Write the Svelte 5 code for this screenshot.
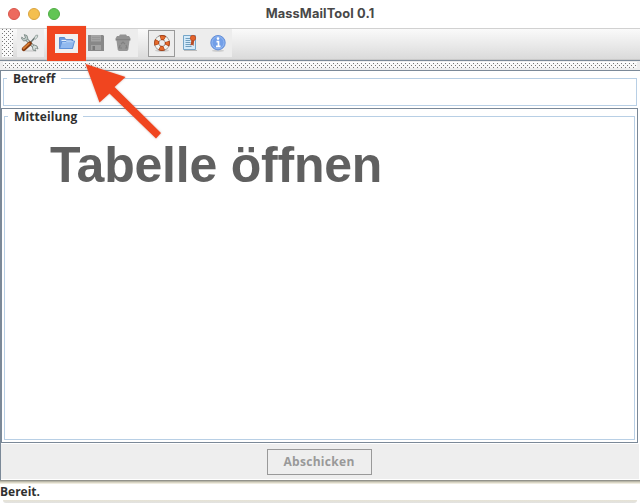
<script>
  const title = 'MassMailTool 0.1';
</script>

<div class="window">
  <header>
    <div class="lights"><i class="red"></i><i class="yellow"></i><i class="green"></i></div>
    <h1>{title}</h1>
  </header>

  <div class="toolbar">
    <div class="grip"></div>
    <div class="group first">
      <svg class="icon" width="20" height="20" viewBox="0 0 20 20">
        <ellipse cx="10" cy="17.8" rx="7" ry="1" fill="#d2d2d2" />
        <path d="M5 5l9 9" stroke="#687572" stroke-width="3" />
        <path d="M5 5l9 9" stroke="#cbd6d2" stroke-width="1.6" />
        <path d="M4.2 1.6l2.8 1 .8 2.8-1.6 2.2-2.5.3-2-1.8v-2l2.2 1.6 1.6-1z" fill="#becbc7" stroke="#75827e" stroke-width=".8" />
        <path d="M12.4 13.6l1.8-1.6 2.8 1 1 3-1.8-.8-1.2 1 .6 1.8-2.6-1z" fill="#d5deda" stroke="#75827e" stroke-width=".8" />
        <path d="M9.8 10.2l5.2-5.6" stroke="#687572" stroke-width="1.5" />
        <path d="M14 5.3l1.8-3 1.9-.2-.2 2.2-2.2 2z" fill="#d5dedb" stroke="#84918d" stroke-width=".7" />
        <path d="M3.8 16l6-5.5" stroke="#843b11" stroke-width="4.2" stroke-linecap="round" />
        <path d="M3.5 15.5l5.5-5" stroke="#d77b32" stroke-width="1.7" stroke-linecap="round" />
      </svg>
    </div>
    <div class="group files">
      <div class="cell highlight">
        <svg class="icon" width="20" height="20" viewBox="0 0 20 20">
          <path d="M2.5 15.5v-11h5l1 2h7v9z" fill="#6b9ade" stroke="#5d8acb" />
          <path d="M4.5 7.5h10" stroke="#e5f0fd" stroke-width="1.2" />
          <path d="M2.7 15.5l2-6.5h3.5l1-1h8.3l-2 7.5z" fill="#91b9ef" stroke="#5f91d9" />
          <path d="M5.2 9.7h3.3l1-1h7" stroke="#bdd7f8" fill="none" />
        </svg>
      </div>
      <div class="cell">
        <svg class="icon" width="20" height="20" viewBox="0 0 20 20">
          <path d="M2 2h15l1 1v15H2z" fill="#888" />
          <path d="M5 2h10v6.5H5z" fill="#a3a3a3" />
          <path d="M6 4.5h8M6 6.5h8" stroke="#979797" />
          <path d="M5 12h10v5H5z" fill="#a2a2a2" /><path d="M6.5 13H9v4H6.5z" fill="#787878" />
        </svg>
      </div>
      <div class="cell">
        <svg class="icon" width="20" height="20" viewBox="0 0 20 20">
          <path d="M6 3l1-1.5h6L14 3h2l1.5 2.5v2h-15v-2L4 3z" fill="#929292" />
          <path d="M3.4 7h13.2l-1.3 9.5-1 1.5H5.7l-1-1.5z" fill="#969696" />
          <path d="M3 6.7h14" stroke="#818181" />
          <path d="M8 11l2-2 2 2M13 12l1 3h-2M9 15H6l1.2-3" fill="none" stroke="#818181" stroke-width="1.2" />
        </svg>
      </div>
    </div>
    <div class="group help">
      <div class="cell selected">
        <svg class="icon" width="20" height="20" viewBox="0 0 20 20">
          <ellipse cx="10" cy="17.5" rx="7" ry="1.4" fill="#ccc" />
          <circle cx="10" cy="10" r="5.4" fill="none" stroke="#777" stroke-width="5" />
          <circle cx="10" cy="10" r="5.4" fill="none" stroke="#f2f2ee" stroke-width="3.8" />
          <circle cx="10" cy="10" r="5.4" fill="none" stroke="#a94014" stroke-width="5" stroke-dasharray="4.8 3.68" stroke-dashoffset="2.4" />
          <circle cx="10" cy="10" r="5.4" fill="none" stroke="#e46a2c" stroke-width="3.2" stroke-dasharray="3.8 4.68" stroke-dashoffset="1.9" />
        </svg>
      </div>
      <div class="cell">
        <svg class="icon" width="20" height="20" viewBox="0 0 20 20">
          <path d="M4 17.5h13" stroke="#bbb" />
          <path d="M3.5 2.5h12v14h-12z" fill="#d4eafa" stroke="#75a6c8" />
          <path d="M5.5 5.5h5M5.5 7.5h5M5.5 9.5h5M5.5 11.5h7M5.5 13.5h6" stroke="#709fbe" />
          <path d="M11.5 6.5l-1 6 1.8-.8 1.2 1.3.8-6.5z" fill="#b84c25" />
          <circle cx="13" cy="5" r="2.7" fill="#e4632b" stroke="#b64620" stroke-width=".7" />
        </svg>
      </div>
      <div class="cell">
        <svg class="icon" width="20" height="20" viewBox="0 0 20 20">
          <ellipse cx="10" cy="17.7" rx="6" ry="1" fill="#ccc" />
          <circle cx="10" cy="9.7" r="7.2" fill="#729fe8" stroke="#6790d7" />
          <circle cx="10" cy="9.7" r="6" fill="none" stroke="#92b8f3" />
          <path d="M8.5 8.7h2v4.7m-2.5 0h4.5" fill="none" stroke="#fff" stroke-width="1.7" />
          <circle cx="10" cy="5.6" r="1.3" fill="#fff" />
        </svg>
      </div>
    </div>
  </div>

  <div class="dragbar">
    <div class="dots"></div>
  </div>

  <main>
    <section class="subject">
      <div class="frame"><h2>Betreff</h2></div>
    </section>
    <section class="message">
      <div class="frame">
        <h2>Mitteilung</h2>
        <p>Tabelle öffnen</p>
      </div>
    </section>
    <div class="actions"><button disabled>Abschicken</button></div>
  </main>

  <footer>
    <div class="groove"></div>
    <span>Bereit.</span>
    <div class="bottom"></div>
  </footer>

  <svg class="pointer" width="640" height="150" viewBox="0 0 640 150">
    <path d="M85.500 64l40 13-11 10 46.500 46-5 5.500-46.500-45-10 9z" fill="#f0451f" />
  </svg>
</div>

<style>
  :global(body) { margin: 0; background: #fff; }
  * { box-sizing: border-box; }
  .window { position: relative; display: flex; flex-direction: column; width: 640px; height: 503px; overflow: hidden; background: #fff; color: #303030; font: bold 12px/16px "Open Sans", "Noto Sans", sans-serif; }
  header { display: grid; grid-template-columns: 60px 520px 60px; height: 28px; flex: none; }
  .lights { display: flex; gap: 8px; padding: 8px 0 0 8px; }
  .lights i { width: 12px; height: 12px; flex: none; border-radius: 50%; }
  .red { background: #ed6a5e; border: 1px solid #d9564b; }
  .yellow { background: #f4bf4f; border: 1px solid #dba540; }
  .green { background: #61c554; border: 1px solid #50ae45; }
  h1 { margin: 0; text-align: center; font: 700 12.8px/27px Inter, sans-serif; letter-spacing: .13px; color: #484848; }
  .toolbar { height: 32px; flex: none; display: flex; border-top: 1px solid #d1d1d1; background: linear-gradient(#fafafa, #e9e9e9 55%, #dadada); border-bottom: 1px solid #c9c9c9; }
  .grip, .dots { background-image: radial-gradient(circle at .5px .5px, #777 .6px, transparent .7px), radial-gradient(circle at 2.5px 2.5px, #777 .6px, transparent .7px); background-size: 4px 4px; }
  .grip { width: 11px; height: 28px; margin: 0 4px 0 2px; background-color: #fafafa; }
  .group { display: flex; align-items: center; height: 28px; background: #ededed; }
  .first { width: 27px; justify-content: center; margin-right: 4px; padding-right: 2px; }
  .files { width: 90px; }
  .help { width: 84px; margin-left: 10px; }
  .cell { display: flex; align-items: center; justify-content: center; width: 28px; height: 28px; flex: none; }
  .highlight { width: 39px; height: 35px; margin-left: -1px; border: 8px solid #f0451f; background: #f2f0ef; z-index: 1; box-shadow: 0 0 1px #d2b0a5; }
  .files .cell:nth-child(2) { width: 20px; }
  .files .cell:nth-child(3) { width: 34px; }
  .selected { border: 1px solid #999; width: 27px; height: 27px; }
  .help .cell:nth-child(2) { width: 29px; }
  .icon { display: block; flex: none; }
  .dragbar { height: 11px; flex: none; border-top: 1px solid #7b8998; border-bottom: 1px solid #7b8998; background: #eee; }
  .dots { height: 6px; margin: 1px 3px 0; border-top: 1px solid #fff; background-color: #f8f8f8; background-position: 0 2px; }
  main { height: 409px; flex: none; display: flex; flex-direction: column; border-left: 1px solid #7b8998; }
  .subject { height: 37px; padding: 7px 3px 2px 2px; flex: none; }
  .subject .frame { height: 28px; }
  .frame { border: 1px solid #b8cfe5; }
  h2 { width: fit-content; height: 12px; margin: -6px 0 0 3px; padding: 0 6px; background: #fff; font: inherit; line-height: 12px; letter-spacing: .1px; }
  .subject h2 { letter-spacing: 0; }
  .message { height: 335px; flex: none; border: 1px solid #7b8998; margin-right: 2px; padding: 7px 2px 2px 2px; }
  .message .frame { height: 324px; }
  p { margin: 12px 0 0 45px; font: bold 50px/60px "Liberation Sans", sans-serif; letter-spacing: -.22px; color: #606060; }
  .actions { height: 37px; flex: none; border: 1px solid #fff; border-left: 0; background: #eee; display: flex; justify-content: center; padding: 5px 2px 0 0; }
  button { width: 105px; height: 26px; padding: 0; border: 1px solid #999; background: #eee; color: #999; font: inherit; letter-spacing: .3px; }
  footer { flex: 1; display: flex; flex-direction: column; }
  .groove { height: 4px; flex: none; background: linear-gradient(#92928b 0 1px, #b9b7a8 1px 2px, #d8d4c4 2px 3px, #efecdf 3px); }
  footer span { height: 16px; }
  .bottom { height: 3px; margin: 0 3px; background: linear-gradient(#e6e3d4, #e2e2e2); border-radius: 0 0 4px 4px; }
  .pointer { position: absolute; inset: 0 auto auto 0; filter: drop-shadow(0 0 1px #a66b5c88); }
</style>
